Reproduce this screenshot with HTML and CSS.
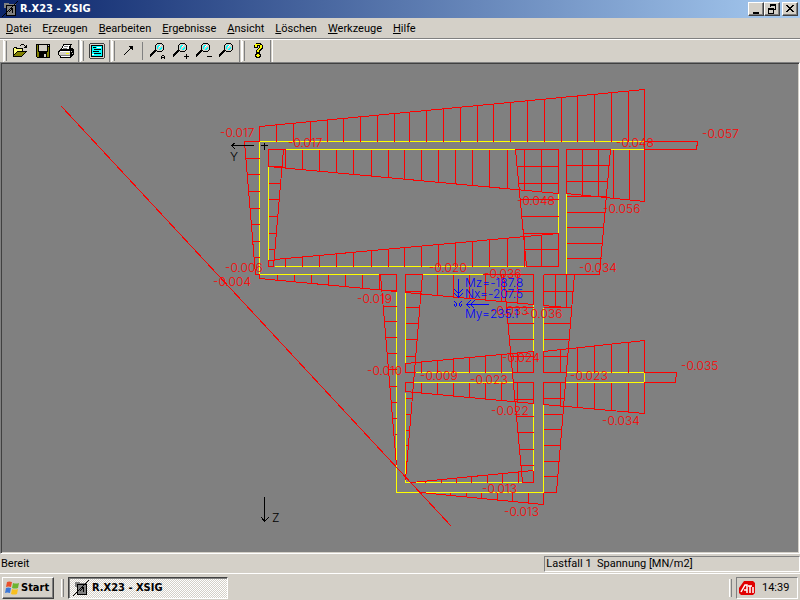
FILE: index.html
```html
<!DOCTYPE html>
<html lang="de">

<head>
    <meta charset="UTF-8">
    <meta name="viewport" content="width=device-width, initial-scale=1.0">
    <title>R.X23 - XSIG</title>
    <link rel="stylesheet" href="styles.css">
</head>

<body>
    <header class="title-bar">
        <svg class="icon" viewBox="0 0 16 16">
            <path fill="#808080" d="M2 2h5v1h7v11h-9v-7h-3z" />
            <path fill="none" stroke="#000" d="M4.500 4.500h9v10h-9zM0 16L16 0M7 11l3-3M10.500 7v5M8 7.500h3" />
        </svg>
        <h1>R.X23 - XSIG</h1>
        <div class="window-buttons">
            <button aria-label="Minimieren"><svg viewBox="0 0 12 10"><path fill="#000" d="M3 8h6v2h-6z" /></svg></button>
            <button aria-label="Wiederherstellen"><svg viewBox="0 0 12 10"><path fill="#000" d="M4 0h6v6h-2v-1h1v-3h-4v1h-1zM2 4h6v6h-6zM3 6v3h4v-3z" fill-rule="evenodd" /></svg></button>
            <button class="close" aria-label="Schließen"><svg viewBox="0 0 12 10"><path fill="#000" d="M2 1h2v1h1v1h2v-1h1v-1h2v1h-1v1h-1v1h-1v1h1v1h1v1h1v1h-2v-1h-1v-1h-2v1h-1v1h-2v-1h1v-1h1v-1h1v-1h-1v-1h-1v-1h-1z" /></svg></button>
        </div>
    </header>

    <nav class="menu-bar">
        <button><u>D</u>atei</button>
        <button>E<u>r</u>zeugen</button>
        <button><u>B</u>earbeiten</button>
        <button><u>E</u>rgebnisse</button>
        <button><u>A</u>nsicht</button>
        <button><u>L</u>öschen</button>
        <button><u>W</u>erkzeuge</button>
        <button><u>H</u>ilfe</button>
    </nav>

    <div class="toolbar">
        <div class="tool-group">
            <button aria-label="Öffnen">
                <svg class="icon" viewBox="0 0 16 16">
                    <path fill="#000" d="M9 1h3v1h-3zM8 2h1v1h-1zM12 2h1v1h1v-1h1v3h-3v-1h1v-1h-1zM2 4h3v1h6v3h4v1h-1v1h-1v1h-1v1h-1v1h-1v1h-9v-9h1z" />
                    <path fill="#ffff80" d="M2 5h2v1h6v2h-5v1h-1v1h-1v1h-1z" />
                    <path fill="#808000" d="M5 9h8v1h-1v1h-1v1h-1v1h-8v-1h1v-1h1v-1h1z" />
                </svg>
            </button>
            <button aria-label="Speichern">
                <svg class="icon" viewBox="0 0 16 16">
                    <path fill="#000" d="M1 1h14v14h-13v-1h-1z" />
                    <path fill="#808000" d="M2 2h1v7h1v1h8v-1h1v-5h1v10h-2v-4h-8v4h-2z" />
                    <path fill="#d4d0c8" d="M4 2h8v6h-8zM13 2h1v1h-1zM9 11h2v3h-2z" />
                </svg>
            </button>
            <button aria-label="Drucken">
                <svg class="icon" viewBox="0 0 16 16">
                    <path fill="#000" d="M5 1h9v1h-1v3h2v1h1v6h-1v1h-1v1h-1v1h-11v-2h-1v-1h-1v-4h1v-1h1v-1h1v-1h1z" />
                    <path fill="#fff" d="M6 2h6v1h-1v3h-7v-1h1zM2 8h10v1h-10zM3 13h9v1h-9z" />
                    <path fill="#d4d0c8" d="M1 9h11v3h-11zM13 8h1v1h-1zM14 10h1v1h-1z" />
                    <path fill="#808080" d="M6 3h4v1h-4zM5 5h4v1h-4zM2 12h10v1h-10z" />
                    <path fill="#ffff00" d="M8 10h3v1h-3z" />
                </svg>
            </button>
        </div>
        <div class="tool-group">
            <button aria-label="Liste">
                <svg class="icon" viewBox="0 0 16 16">
                    <path fill="#404040" d="M1 0h14v1h1v14h-1v1h-14v-1h-1v-14h1z" />
                    <path fill="#d4d0c8" d="M1 1h14v14h-14z" />
                    <path fill="#000" d="M2 2h12v12h-12z" />
                    <path fill="#00ffff" d="M3 3h10v10h-10z" />
                    <path fill="#000" d="M4 4h3v1h-3zM5 6h7v1h-7zM4 8h6v1h-6zM5 10h7v1h-7z" />
                    <path fill="#fff" d="M8 4h4v1h-4zM3 11h2v1h-2z" />
                </svg>
            </button>
        </div>
        <div class="tool-group">
            <button aria-label="Pfeil">
                <svg class="icon" viewBox="0 0 16 16">
                    <path stroke="#000" fill="none" d="M4 12L12 4" />
                    <path fill="#000" d="M9 3h4v4h-1v-1h-1v-1h-1v-1h-1z" />
                </svg>
            </button>
            <span class="separator"></span>
            <button aria-label="Zoom alles">
                <svg class="icon" viewBox="0 0 16 16">
                    <use href="#lens" />
                    <path fill="none" stroke="#000" d="M11.500 16v-3M14.500 16v-3M12 12.500h2M11 14.500h4" />
                </svg>
            </button>
            <button aria-label="Vergrößern">
                <svg class="icon" viewBox="0 0 16 16">
                    <use href="#lens" />
                    <path fill="#000" d="M11 13h5v1h-5zM13 11h1v5h-1z" />
                </svg>
            </button>
            <button aria-label="Verkleinern">
                <svg class="icon" viewBox="0 0 16 16">
                    <use href="#lens" />
                    <path fill="#000" d="M11 13h5v1h-5z" />
                </svg>
            </button>
            <button aria-label="Zoom">
                <svg class="icon" viewBox="0 0 16 16">
                    <g id="lens">
                        <path fill="#000" d="M7 0h5v1h1v1h1v5h-1v1h-1v1h-5v-1h-1v1h-1v1h-1v1h-1v1h-1v1h-1v1h-1v-3h1v-1h1v-1h1v-1h1v-1h1v-5h1v-1h1z" />
                        <path fill="#d4d0c8" d="M7 1h5v1h1v5h-1v1h-5v-1h-1v-5h1z" />
                        <path fill="#00ffff" d="M8 2h2v1h-1v1h-1v2h-1v-3h1zM11 4h1v2h-1v1h-2v-1h1v-1h1z" />
                        <path fill="#fff" d="M10 2h1v1h-1zM9 3h1v1h-1z" />
                    </g>
                </svg>
            </button>
        </div>
        <div class="tool-group">
            <button aria-label="Info">
                <svg class="icon" viewBox="0 0 16 16">
                    <path fill="#000" d="M5 0h6v1h1v1h1v4h-1v1h-1v1h-1v2h-4v-3h1v-1h1v-1h1v-2h-1v2h-4v-3h1v-1h1zM6 10h4v1h1v3h-1v1h-4v-1h-1v-3h1z" />
                    <path fill="#ffff00" d="M5 1h5v1h2v3h-1v1h-1v1h-1v2h-2v-2h1v-1h1v-1h1v-3h-3v2h-2zM7 11h2v1h1v1h-1v1h-2v-1h-1v-1h1z" />
                </svg>
            </button>
        </div>
        <div class="tool-group rest"></div>
    </div>

    <main class="canvas">
        <svg class="drawing" viewBox="2 64 796 488" preserveAspectRatio="xMinYMin meet">
            <g class="lines" transform="translate(.5 .5)">
                <!-- cross section -->
                <path class="section" d="M259 141H644V149H610M515 149H285M259 141V274H379M268 166V260M274 266H526M558 193V233M566 193V274M422 274H482" />
                <path class="section" d="M396 290V492H543V404M405 292V364M405 392V482H522M533 304V351M533 403V471M543 307V351M415 372H512M413 382H513M566 372H644V382H565" />

                <!-- top flange -->
                <path class="stress" d="M259 141V126L644 89V201L566 193V149H610M644 141H697L696 149H644" />
                <path class="stress" d="M276 124V141M293 123V141M310 121V141M327 119V141M343 118V141M360 116V141M377 115V141M394 113V141M409 112V141M426 110V141M443 108V141M460 107V141M477 105V141M493 104V141M510 102V141M527 100V141M544 99V141M561 97V141M577 95V141M594 94V141M611 92V141M628 91V141" />
                <path class="stress" d="M285 149H268V166L558 193V149H515" />
                <path class="stress" d="M285 149V168M302 149V169M319 149V171M336 149V172M353 149V174M371 149V176M388 149V177M404 149V179M421 149V180M438 149V182M455 149V183M472 149V185M489 149V187M507 149V188M524 149V190M541 149V191M582 149V195M598 149V196M613 149V198M629 149V199" />

                <!-- upper left web -->
                <path class="stress" d="M259 141H244L255 274H259M245 158H259M247 174H259M248 191H259M250 208H259M251 224H259M252 241H259M254 257H259" />
                <path class="stress" d="M283 149L273 266H268V260H274M268 166H282M268 183H280M268 199H279M268 216H277M268 233H276M268 249H274" />

                <!-- upper right web -->
                <path class="stress" d="M515 149L526 266H558V233H523M517 166H558M518 183H558M520 199H558M521 216H558M524 249H558" />
                <path class="stress" d="M610 149L599 274H543M566 165H609M566 181H607M566 196H606M566 212H605M566 227H603M566 243H602M566 258H601" />

                <!-- middle flange -->
                <path class="stress" d="M274 259L558 233M285 258V266M302 256V266M319 255V266M336 253V266M353 252V266M371 250V266M388 249V266M404 247V266M421 246V266M438 244V266M455 242V266M472 241V266M489 239V266M507 238V266M524 236V266M541 235V266" />
                <path class="stress" d="M259 274V278L396 291V274H379V289M277 274V280M294 274V281M311 274V283M328 274V285M345 274V286M362 274V288" />
                <path class="stress" d="M422 274H405V292L533 304V274H482M437 274V295M453 274V296M469 274V298M485 274V300M501 274V301M517 274V303M543 274V305L566 307V274M555 274V306" />

                <!-- lower left web -->
                <path class="stress" d="M380 274L396 465M381 290H396M383 306H396M384 321H396M385 337H396M387 353H396M388 369H396M389 386H396M391 402H396M392 418H396M394 434H396" />
                <path class="stress" d="M422 274L405 480M405 291H421M405 307H419M405 323H418M405 339H417M405 356H415M405 398H412M405 414H410M405 430H409M405 445H408M405 461H407" />

                <!-- lower right web -->
                <path class="stress" d="M503 274L522 482H533V470M505 291H533M506 307H533M507 323H533M509 339H533M510 356H533M514 399H533M516 416H533M517 432H533M519 449H533M520 465H533" />
                <path class="stress" d="M574 274L556 492H543M543 291H573M543 307H571M543 323H570M543 339H569M543 356H567M543 398H564M543 414H562M543 429H561M543 445H560M543 461H559M543 476H557" />

                <!-- lower cross flange -->
                <path class="stress" d="M415 372H405V363L533 351V372H512M421 361V372M437 360V372M453 358V372M469 357V372M485 355V372M501 354V372M517 352V372" />
                <path class="stress" d="M413 382H405V391L533 403V382H513M421 382V393M437 382V394M453 382V395M469 382V397M485 382V399M501 382V400M517 382V402" />
                <path class="stress" d="M566 372H543V351L644 340V372H676L675 382H644V413L543 404V382H565M560 349V372M577 347V372M594 345V372M611 344V372M628 342V372M560 382V406M577 382V407M594 382V409M611 382V410M628 382V412" />

                <!-- bottom flange -->
                <path class="stress" d="M411 482L533 470M425 481V482M441 479V482M456 478V482M471 476V482M487 475V482M502 473V482M518 471V482" />
                <path class="stress" d="M420 492L543 504V492M435 492V493M450 492V495M466 492V496M481 492V498M497 492V500M512 492V501M528 492V503" />

                <!-- neutral axis -->
                <path class="stress" d="M61 106L451 526" />

                <path class="axis" d="M253 145H231M235 142L231 145L235 149M260 145H267M264 142V149M264 496V521M261 517L264 521L268 517" />
                <path class="force" d="M458 278V297M454 289L458 293L462 289M454 293L458 297L462 293M488 304H466M470 300L466 304L470 308M474 300L470 304L474 308" />
                <path class="force" d="M454 301L456 303V305L454 307M461 301L459 303V305L461 307M454 303V305M461 303V305" />
            </g>

            <g class="values">
                <text x="220" y="137">-0.017</text>
                <text x="288" y="147">-0.017</text>
                <text x="616" y="147">-0.048</text>
                <text x="702" y="138">-0.057</text>
                <text x="517" y="205">-0.048</text>
                <text x="603" y="213">-0.056</text>
                <text x="225" y="272">-0.006</text>
                <text x="213" y="286">-0.004</text>
                <text x="357" y="303">-0.019</text>
                <text x="429" y="272">-0.020</text>
                <text x="484" y="278">-0.036</text>
                <text x="579" y="272">-0.034</text>
                <text x="491" y="315">-0.033</text>
                <text x="525" y="318">-0.036</text>
                <text x="367" y="375">-0.010</text>
                <text x="420" y="380">-0.009</text>
                <text x="470" y="384">-0.023</text>
                <text x="502" y="362">-0.024</text>
                <text x="491" y="415">-0.022</text>
                <text x="570" y="380">-0.023</text>
                <text x="681" y="370">-0.035</text>
                <text x="602" y="425">-0.034</text>
                <text x="482" y="493">-0.013</text>
                <text x="504" y="516">-0.013</text>
            </g>
            <g class="forces">
                <text x="465" y="287">Mz=-187.8</text>
                <text x="465" y="298">Nx=-207.5</text>
                <text x="465" y="318">My=235.1</text>
            </g>
            <g class="axis-names">
                <text x="230" y="161">Y</text>
                <text x="272" y="522">Z</text>
            </g>
        </svg>
    </main>

    <div class="status-bar">
        <span class="status-text">Bereit</span>
        <span class="status-pane">Lastfall 1&nbsp; Spannung [MN/m2]</span>
    </div>

    <footer class="taskbar">
        <button class="start">
            <svg class="icon smooth" viewBox="0 0 16 16">
                <path fill="#e8502c" d="M3 2q2-1 5 0l-1 5q-3-1-5 0z" />
                <path fill="#6cb430" d="M9 3q3 1 6 0l-1 5q-3 1-6 0z" />
                <path fill="#3c78d8" d="M2 8q2-1 5 0l-1 5q-3-1-5 0z" />
                <path fill="#f8c020" d="M8 9q3 1 6 0l-1 5q-3 1-6 0z" />
            </svg>
            Start
        </button>
        <span class="grip"></span>
        <button class="task">
            <svg class="icon" viewBox="0 0 16 16">
                <path fill="#808080" d="M2 2h5v1h7v11h-9v-7h-3z" />
                <path fill="none" stroke="#000" d="M4.500 4.500h9v10h-9zM0 16L16 0M7 11l3-3M10.500 7v5M8 7.500h3" />
            </svg>
            R.X23 - XSIG
        </button>
        <span class="grip tray-grip"></span>
        <div class="tray">
            <svg class="icon smooth" viewBox="0 0 16 16">
                <path fill="#e00000" d="M5 1h9l2 2v10l-2 2h-12l-2-2v-5z" />
                <path fill="none" stroke="#fff" stroke-width="1.500" d="M2 12L6 5h2v8M5 10h3M9 6h4M11 6v7M14 7v6" />
            </svg>
            <time>14:39</time>
        </div>
    </footer>
</body>

</html>
```

FILE: styles.css
```css
* {
    margin: 0;
    padding: 0;
    box-sizing: border-box;
}

body {
    display: flex;
    flex-direction: column;
    height: 100vh;
    background-color: #d4d0c8;
    color: #000;
    font-family: Roboto, "Liberation Sans", sans-serif;
    font-size: 11px;
    line-height: 14px;
    overflow: hidden;
}

button {
    border: none;
    background: none;
    color: inherit;
    font: inherit;
}

.icon {
    width: 16px;
    height: 16px;
    flex: none;
    shape-rendering: crispEdges;
}

.icon.smooth {
    shape-rendering: auto;
}

.title-bar h1,
.start,
.task {
    font-family: "DejaVu Sans Condensed", "DejaVu Sans", sans-serif;
    font-stretch: condensed;
    font-size: 11px;
    font-weight: bold;
}

/* Title bar */
.title-bar {
    display: flex;
    align-items: center;
    gap: 2px;
    height: 18px;
    padding: 0 2px;
    background: linear-gradient(to right, #0a246a, #a6caf0);
    color: #fff;
}

.title-bar h1 {
    flex: 1;
}

.window-buttons {
    display: flex;
}

.window-buttons button {
    display: flex;
    width: 16px;
    height: 14px;
    padding: 1px;
    background-color: #d4d0c8;
    border: 1px solid;
    border-color: #fff #404040 #404040 #fff;
    box-shadow: inset -1px -1px #808080;
}

.window-buttons svg {
    width: 12px;
    height: 10px;
    shape-rendering: crispEdges;
}

.window-buttons .close {
    margin-left: 2px;
}

/* Menu */
.menu-bar {
    display: flex;
    gap: 11px;
    height: 21px;
    padding: 1px 6px 0;
    border-bottom: 1px solid #808080;
}

.menu-bar u {
    text-underline-offset: 1px;
}

/* Toolbar */
.toolbar {
    display: flex;
    gap: 1px;
    height: 23px;
    padding-left: 3px;
    border-top: 1px solid #fff;
}

.tool-group {
    display: flex;
    align-items: center;
    padding-right: 1px;
    border-left: 1px solid #fff;
    border-right: 1px solid #808080;
}

.tool-group::before {
    content: "";
    width: 1px;
    height: 20px;
    margin-right: 1px;
    border-left: 1px solid #fff;
    border-right: 1px solid #808080;
}

.tool-group button {
    display: flex;
    align-items: center;
    justify-content: center;
    width: 23px;
    height: 22px;
}

.tool-group.rest {
    flex: 1;
    border-right: none;
}

.tool-group.rest::before {
    display: none;
}

.separator {
    width: 1px;
    height: 18px;
    margin: 0 3px;
    background-color: #808080;
}

/* Drawing area */
.canvas {
    flex: 1;
    min-height: 0;
    background-color: #808080;
    border: 1px solid;
    border-color: #808080 #fff #fff #808080;
    box-shadow: inset 1px 1px #404040, inset -1px -1px #d4d0c8;
    padding: 1px;
}

.drawing {
    display: block;
    width: 100%;
    height: 100%;
}

.lines path {
    fill: none;
    stroke-width: 1;
    shape-rendering: crispEdges;
}

.lines .section {
    stroke: #ff0;
}

.lines .stress {
    stroke: #f00;
}

.lines .axis {
    stroke: #000;
}

.lines .force {
    stroke: #00f;
}

.drawing text {
    font-family: Inter, "Liberation Sans", sans-serif;
    font-size: 12px;
    font-weight: 300;
}

.values {
    fill: #f00;
}

.forces {
    fill: #00f;
}

.axis-names {
    fill: #000;
}

/* Status bar */
.status-bar {
    display: flex;
    justify-content: space-between;
    height: 19px;
    padding: 2px 0 1px 1px;
}

.status-text {
    padding-top: 1px;
}

.status-pane {
    width: 32%;
    padding-left: 1px;
    border: 1px solid;
    border-color: #808080 #fff #fff #808080;
}

/* Taskbar */
.taskbar {
    display: flex;
    align-items: center;
    height: 27px;
    padding: 1px 2px 0;
    border-top: 1px solid #fff;
}

.start,
.task {
    display: flex;
    align-items: center;
    height: 22px;
    border: 1px solid;
}

.start {
    gap: 1px;
    width: 52px;
    padding-left: 1px;
    border-color: #fff #404040 #404040 #fff;
    box-shadow: inset -1px -1px #808080;
}

.grip {
    width: 3px;
    height: 18px;
    margin: 0 4px 0 7px;
    border-left: 1px solid #fff;
    border-right: 1px solid #808080;
}

.task {
    gap: 3px;
    width: 160px;
    padding-left: 4px;
    border-color: #404040 #fff #fff #404040;
    box-shadow: inset 1px 1px #808080;
    background: repeating-conic-gradient(#fff 0 25%, #d4d0c8 0 50%) 0 0 / 2px 2px;
}

.tray-grip {
    margin-left: auto;
}

.tray {
    display: flex;
    align-items: center;
    gap: 7px;
    width: 62px;
    height: 22px;
    padding: 0 2px;
    border: 1px solid;
    border-color: #808080 #fff #fff #808080;
}
```
